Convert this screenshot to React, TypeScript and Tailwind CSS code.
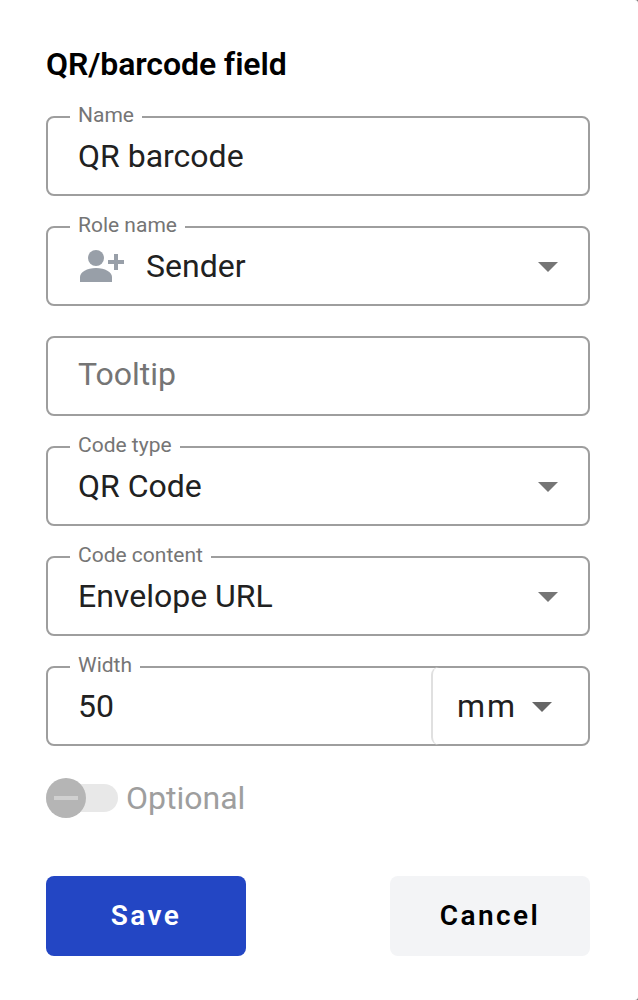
import type { ReactNode } from "react";

function Caret({ className = "text-[#757575]" }: { className?: string }) {
  return (
    <svg className={`mt-0.5 shrink-0 ${className}`} width="20" height="10" viewBox="0 0 20 10" fill="currentColor">
      <path d="M0 0h20L10 10z" />
    </svg>
  );
}

function PersonPlus() {
  return (
    <svg className="shrink-0 text-[#989fa8]" width="44" height="32" viewBox="0 0 44 32" fill="currentColor">
      <circle cx="16" cy="8" r="8" />
      <path d="M0 32v-5c0-5 7-9 16-9s16 4 16 9v5z" />
      <path d="M34 4h4v6h6v4h-6v6h-4v-6h-6v-4h6z" />
    </svg>
  );
}

function Field({ label, children, className = "pr-[30px]" }: { label?: string; children: ReactNode; className?: string }) {
  return (
    <div className={`relative flex h-20 items-center rounded-lg border-2 border-[#9e9e9e] pl-[30px] ${className}`}>
      {label && (
        <span className="absolute -top-[18px] left-[22px] bg-white px-2 text-[21px] leading-[30px] text-[#757575]">
          {label}
        </span>
      )}
      {children}
    </div>
  );
}

export default function App() {
  return (
    <div className="w-[638px] bg-[#777777]">
      <main className="h-[1000px] rounded-r-[3px] bg-white pl-[46px] pr-12 pt-11 font-['Roboto',sans-serif] text-[32px] leading-10 text-[#212121]">
        <h1 className="text-[32px] font-semibold leading-10 tracking-[-0.1px] text-black">QR/barcode field</h1>
        <div className="mt-8 flex flex-col gap-[30px]">
          <Field label="Name">QR barcode</Field>
          <Field label="Role name">
            <span className="flex flex-1 items-center gap-[22px] pl-0.5">
              <PersonPlus />
              <span>Sender</span>
            </span>
            <Caret />
          </Field>
          <Field>
            <span className="-mt-1 text-[#757575]">Tooltip</span>
          </Field>
          <Field label="Code type">
            <span className="flex-1">QR Code</span>
            <Caret />
          </Field>
          <Field label="Code content">
            <span className="flex-1">Envelope URL</span>
            <Caret />
          </Field>
          <Field label="Width" className="">
            <span className="flex-1">50</span>
            <span className="flex h-[78px] w-[157px] items-center gap-[15px] rounded-l-lg border-l-2 border-[#e0e0e0] pl-6">
              <span className="tracking-[2px]">mm</span>
              <Caret className="text-[#666666]" />
            </span>
          </Field>
        </div>
        <div className="mt-8 flex h-10 items-center gap-2">
          <span className="flex h-7 w-[72px] items-center rounded-full bg-[#e8e8e8]">
            <span className="flex size-10 items-center justify-center rounded-full bg-[#b5b5b5]">
              <span className="h-1 w-6 bg-[#d0d0d0]" />
            </span>
          </span>
          <span className="text-[#9e9e9e]">Optional</span>
        </div>
        <div className="mt-[58px] flex justify-between text-[28px] font-semibold tracking-[2.4px]">
          <button className="h-20 w-[200px] rounded-lg bg-[#2346c4] text-white">Save</button>
          <button className="h-20 w-[200px] rounded-lg bg-[#f3f4f6] text-black">Cancel</button>
        </div>
      </main>
    </div>
  );
}
